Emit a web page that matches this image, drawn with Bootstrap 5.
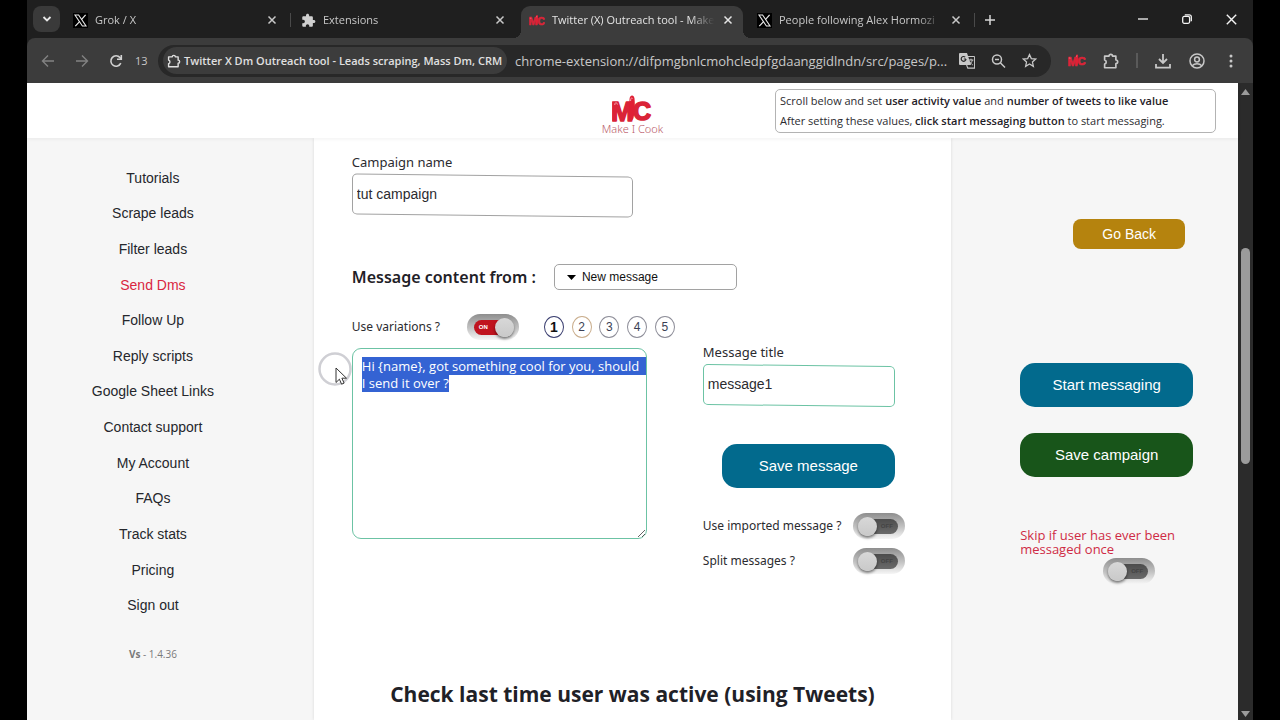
<!DOCTYPE html>
<html lang="en">
<head>
<meta charset="utf-8">
<meta name="viewport" content="width=device-width, initial-scale=1">
<title>Twitter (X) Outreach tool - Make I Cook</title>
<link href="https://cdn.jsdelivr.net/npm/bootstrap@5.3.0/dist/css/bootstrap.min.css" rel="stylesheet">
<style>
  :root { --ui: "Noto Sans", "Open Sans", sans-serif; --chrome: "Open Sans", "Noto Sans", sans-serif; --arial: "Liberation Sans", Arial, sans-serif; }
  body { background: #000; font-family: var(--ui); font-size: 13px; color: #2b2b2f; }
  button { border: 0; background: none; padding: 0; color: inherit; }
  svg { display: block; flex: none; }
  .window-frame { margin: 0 27px; min-height: 100vh; background: #1f1f1f; }

  /* tab strip */
  .tab-strip { height: 38px; padding: 6px 0 0 6px; font: 11px/16px var(--chrome); color: #c8c8c8; }
  .tab-search { width: 27px; height: 26px; border-radius: 8px; background: #3a3a3a; margin-right: 5px; }
  .browser-tab { position: relative; flex: 0 1 222px; min-width: 0; height: 32px; padding: 0 10px 4px 8px; margin-right: 6px; gap: 7px; }
  .browser-tab.split::after { content: ""; position: absolute; right: -4px; top: 7px; width: 1px; height: 14px; background: #4a4a4a; }
  .browser-tab.current { background: #3c3c3c; border-radius: 9px 9px 0 0; color: #e4e4e4; }
  .browser-tab.current::before, .browser-tab.current::after { content: ""; position: absolute; bottom: 0; width: 8px; height: 8px; }
  .browser-tab.current::before { left: -8px; background: radial-gradient(circle at 0 0, transparent 8px, #3c3c3c 8px); }
  .browser-tab.current::after { right: -8px; background: radial-gradient(circle at 100% 0, transparent 8px, #3c3c3c 8px); }
  .tab-label { flex: 1 1 0; min-width: 0; overflow: hidden; white-space: nowrap; -webkit-mask-image: linear-gradient(90deg, #000 84%, transparent 99%); mask-image: linear-gradient(90deg, #000 84%, transparent 99%); }
  .new-tab { margin: 0 0 4px 7px; }
  .win-btn { width: 44px; height: 26px; color: #f4f4f4; }

  /* toolbar */
  .tool-bar { height: 45px; background: #3c3c3c; border-radius: 8px 8px 0 0; padding: 0 13px; font: 13px/20px var(--chrome); color: #c8c8c8; }
  .nav-keys { gap: 18px; width: 118px; flex: none; }
  .zoom-count { margin-left: -7px; font-size: 11px; }
  .omnibox { height: 32px; border-radius: 16px; background: #282828; padding: 0 14px 0 5px; margin-right: 17px; min-width: 0; }
  .site-chip { height: 27px; border-radius: 14px; background: #3c3c3c; padding: 0 5px 0 4px; gap: 3px; font-size: 11px; font-weight: 600; color: #e0e0e0; white-space: nowrap; }
  .address { background: none; border: 0; outline: 0; padding: 0; color: #c8c8c8; margin-left: 8px; min-width: 0; width: 100%; text-overflow: ellipsis; }
  .tool-icons { gap: 16px; flex: none; }
  .tool-sep { width: 2px; height: 15px; background: #5a5a5a; }

  /* page */
  .page-grid { display: grid; grid-template-columns: minmax(0, 9fr) minmax(0, 20fr) minmax(0, 9fr); }
  .page-head { height: 55px; background: #fff; box-shadow: 0 1px 4px rgba(0,0,0,.06); position: relative; }
  .brand-name { font: 300 11px/12px var(--ui); color: #b95a68; }
  .tip-box { width: 441px; justify-self: end; margin: 6px 22px 0 0; height: 44px; border: 1px solid #b3b3b3; border-radius: 5px; padding: 1px 4px; font-size: 11px; line-height: 20px; font-family: var(--chrome); white-space: nowrap; background: #fff; z-index: 1; }
  .tip-box b { color: #1f2127; font-weight: 600; }
  .page-body { background: #f6f6f6; min-height: calc(100vh - 138px); }
  .side-menu { padding: 22px 35px 0 0; }
  .side-links { display: grid; grid-template-rows: repeat(13, 1fr); height: 463px; font: 14px/20px var(--arial); }
  .side-links a { color: #25272c; text-decoration: none; display: flex; align-items: center; justify-content: center; }
  .side-links a.active { color: #d9263f; }
  .version { font: 10px/14px var(--chrome); color: #7a7a7a; margin-top: 24px; }
  .panel-card { background: #fff; box-shadow: 0 0 3px rgba(0,0,0,.12); padding: 14px 38px 10px; }
  .field-label { line-height: 20px; display: block; }

  .slant-field { position: relative; height: 44px; }
  .slant-field::before { content: ""; position: absolute; inset: 3px 0 0; border: 1px solid #a2a2a2; border-radius: 5px; transform: skewY(.6deg); }
  .slant-field.mint::before { border-color: #6cc3a4; }
  .slant-field input { position: relative; width: 100%; height: 100%; border: 0; outline: 0; background: none; padding: 0 5px; font: 14px/20px var(--arial); color: #2b2b2f; }
  .campaign-field { width: 281px; }
  .source-row { margin-top: 48px; gap: 18px; }
  .source-title { font-size: 16px; font-weight: 600; line-height: 26px; color: #1f2127; margin: 0; }
  .source-pick { width: 183px; height: 26px; border: 1px solid #a2a2a2; border-radius: 5px; appearance: none; padding: 0 8px 0 27px; font: 12px/16px var(--arial); color: #111; background: #fff url("data:image/svg+xml,%3Csvg xmlns='http://www.w3.org/2000/svg' width='9' height='5'%3E%3Cpath d='M0 0h9L4.500 5z'/%3E%3C/svg%3E") no-repeat 12px 50%; }

  .editor-row { margin-top: 23px; gap: 56px; }
  .editor-side { width: 295px; }
  .small-label { font-size: 12px; line-height: 20px; }
  .variation-row { height: 28px; margin-bottom: 7px; }
  .variation-row .small-label { width: 115px; }
  .round-set { width: 131px; margin-left: 25px; flex: none; }
  .round-btn { width: 20px; height: 22px; border: 1px solid #8d8d98; border-radius: 50%; font: 12px/20px var(--arial); color: #3b3f55; background: #fff; }
  .round-btn.picked { border-color: #3b3f70; font-weight: 700; font-size: 14px; color: #111; }
  .round-btn.warm { border-color: #c9ad8c; }
  .message-text { display: block; width: 295px; height: 191px; border: 1px solid #6cc3a4; border-radius: 9px; outline: 0; padding: 9px 1px 9px 9px; font: 13px/17px var(--chrome); color: #2b2b2f; background: #fff; resize: both; overflow: hidden; }
  .message-text::selection { background: #3463d3; color: #fff; }
  .pointer-mark { position: absolute; left: -34px; top: 4px; pointer-events: none; }
  .title-side { width: 202px; padding-top: 29px; }
  .title-field { width: 192px; }

  .big-btn { display: block; width: 173px; height: 44px; border-radius: 15px; color: #fff; font: 15px/20px var(--arial); background: #026a8d; }
  .title-side .big-btn { margin: 38px 0 20px 19px; }
  .big-btn.green { background: #18551a; margin-top: 26px; }
  .back-btn { display: block; width: 112px; height: 30px; border-radius: 8px; color: #fff; background: #b5830e; font: 14px/20px var(--arial); margin: 0 0 114px 53px; }
  .option-row { height: 35px; }

  .slide-toggle { appearance: none; position: relative; flex: none; width: 52px; height: 26px; margin: 0; border-radius: 13px; background: linear-gradient(#8e8e8e, #c4c4c4 55%, #f6f6f6); cursor: pointer; }
  .slide-toggle::before { content: "OFF"; position: absolute; inset: 6px 7px 5px 9px; border-radius: 8px; background: linear-gradient(#4c4c4c, #6a6a6a); color: #444; font: 700 6px/15px var(--arial); text-align: right; padding-right: 5px; }
  .slide-toggle::after { content: ""; position: absolute; left: 5px; top: 4px; width: 19px; height: 19px; border-radius: 50%; background: linear-gradient(#d8d8d8, #c9c9c9); box-shadow: 0 2px 3px rgba(0,0,0,.5); }
  .slide-toggle:checked::before { content: "ON"; background: #c0141f; color: #fff; text-align: left; padding-left: 5px; inset: 6px 9px 5px 7px; }
  .slide-toggle:checked::after { left: 28px; }

  .activity-title { font-size: 21px; font-weight: 700; line-height: 30px; margin: 101px 0 0; text-align: center; color: #1f2127; white-space: nowrap; font-family: var(--chrome); }
  .action-side { padding: 81px 0 0 69px; }
  .skip-label { color: #cf2b45; line-height: 14px; margin-top: 51px; display: block; width: 165px; font-family: var(--chrome); }
  .skip-toggle { display: block; margin: 2px 0 0 83px; }

  .scroll-track { width: 15px; flex: none; background: #2b2b2b; padding: 6px 0 3px; }
  .scroll-thumb { width: 9px; border-radius: 5px; background: #9b9b9b; flex: 215 1 0; }
</style>
</head>
<body>
<svg width="0" height="0" class="position-absolute" aria-hidden="true">
  <defs>
    <symbol id="x-mark" viewBox="0 0 15 15">
      <rect width="15" height="15" fill="#000"/>
      <path d="M2 2h3.600l7.400 11H9.400z" fill="none" stroke="#e8e8e8" stroke-width="1.100"/>
      <path d="M12.600 1.800 8.400 6.700M6.800 8.300 2.300 13.200" stroke="#e8e8e8" stroke-width="1.200"/>
    </symbol>
    <symbol id="close-x" viewBox="0 0 10 10"><path d="M1.500 1.500l7 7m0-7l-7 7" stroke="currentColor" stroke-width="1.500" fill="none"/></symbol>
    <symbol id="brand" viewBox="0 0 40 28">
      <g font-family="Liberation Sans, Arial, sans-serif" font-weight="700" fill="#da2438" stroke="#da2438" stroke-width="1.600" stroke-linejoin="round">
        <text x="-1" y="26" font-size="27">M</text>
        <text x="21" y="25" font-size="25">C</text>
      </g>
      <path d="M17.500 4.500c0-5 4.500-5.500 5-1 .6 6 .4 13-1 19.500-1.500 4-4.500 3-4.500-1z" fill="#e01f34"/>
      <path d="M2.800 10c0-3 2-3 2.600-.5M18.600 6c0-3 1-3.500 2-2.500" stroke="#f4a7b0" fill="none"/>
    </symbol>
    <symbol id="puzzle-line" viewBox="0 0 24 24"><path d="M3.500 5.500h5.800a2.400 2.400 0 0 1 4.800 0h4.400v5.200a2.400 2.400 0 0 1 0 4.800v5.500h-15v-4.800a2.900 2.900 0 0 0 0-5.600z" fill="none" stroke="currentColor" stroke-width="2.200" stroke-linejoin="round"/></symbol>
  </defs>
</svg>

<div class="window-frame d-flex flex-column">
  <div class="tab-strip d-flex align-items-start">
    <button class="tab-search d-flex align-items-center justify-content-center flex-shrink-0" aria-label="Search tabs"><svg width="10" height="8" viewBox="0 0 10 8"><path d="M1.500 2l3.500 3.500L8.500 2" fill="none" stroke="#e8e8e8" stroke-width="1.800"/></svg></button>
    <div class="browser-tab split d-flex align-items-center"><svg width="15" height="15"><use href="#x-mark"/></svg><span class="tab-label">Grok / X</span><button aria-label="Close tab"><svg width="10" height="10"><use href="#close-x"/></svg></button></div>
    <div class="browser-tab d-flex align-items-center"><svg width="15" height="15" viewBox="0 0 24 24"><path fill="#cfcfcf" d="M20.500 11H19V7c0-1.100-.9-2-2-2h-4V3.500C13 2.120 11.880 1 10.500 1S8 2.120 8 3.500V5H4c-1.100 0-1.990.9-1.990 2v3.800H3.500c1.490 0 2.700 1.210 2.700 2.700s-1.210 2.700-2.700 2.700H2V20c0 1.100.9 2 2 2h3.800v-1.500c0-1.490 1.210-2.700 2.700-2.700s2.700 1.210 2.700 2.700V22H17c1.100 0 2-.9 2-2v-4h1.500c1.380 0 2.500-1.120 2.500-2.500S21.880 11 20.500 11z"/></svg><span class="tab-label">Extensions</span><button aria-label="Close tab"><svg width="10" height="10"><use href="#close-x"/></svg></button></div>
    <div class="browser-tab current d-flex align-items-center"><svg width="16" height="15"><use href="#brand"/></svg><span class="tab-label">Twitter (X) Outreach tool - Make</span><button aria-label="Close tab"><svg width="10" height="10"><use href="#close-x"/></svg></button></div>
    <div class="browser-tab split d-flex align-items-center"><svg width="15" height="15"><use href="#x-mark"/></svg><span class="tab-label">People following Alex Hormozi</span><button aria-label="Close tab"><svg width="10" height="10"><use href="#close-x"/></svg></button></div>
    <button class="new-tab align-self-center" aria-label="New tab"><svg width="12" height="12" viewBox="0 0 12 12"><path d="M6 1v10M1 6h10" stroke="#d8d8d8" stroke-width="1.500"/></svg></button>
    <div class="d-flex ms-auto">
      <button class="win-btn d-flex align-items-center justify-content-center" aria-label="Minimize"><svg width="10" height="10" viewBox="0 0 10 10"><path d="M0 5h10" stroke="currentColor" stroke-width="1.300"/></svg></button>
      <button class="win-btn d-flex align-items-center justify-content-center" aria-label="Restore"><svg width="10" height="10" viewBox="0 0 10 10" fill="none" stroke="currentColor" stroke-width="1.300"><rect x=".7" y="2.400" width="6.900" height="6.900" rx="1.500"/><path d="M2.800.8h4.500a2 2 0 0 1 2 2v4.500"/></svg></button>
      <button class="win-btn d-flex align-items-center justify-content-center" aria-label="Close"><svg width="11" height="11" viewBox="0 0 11 11"><path d="M.8.8l9.400 9.400m0-9.400L.8 10.200" stroke="currentColor" stroke-width="1.400"/></svg></button>
    </div>
  </div>

  <div class="tool-bar d-flex align-items-center">
    <div class="nav-keys d-flex align-items-center">
      <button aria-label="Back"><svg width="16" height="16" viewBox="0 0 16 16" fill="none" stroke="#828282" stroke-width="1.400"><path d="M14 8H3M8 2.500L2.500 8 8 13.500"/></svg></button>
      <button aria-label="Forward"><svg width="16" height="16" viewBox="0 0 16 16" fill="none" stroke="#828282" stroke-width="1.400"><path d="M2 8h11M8 2.500L13.500 8 8 13.500"/></svg></button>
      <button aria-label="Reload"><svg width="16" height="16" viewBox="0 0 16 16" fill="none" stroke="#d2d2d2" stroke-width="1.600"><path d="M12.800 10.200A5.200 5.200 0 1 1 12 4.600l1.200 1.200"/><path d="M13.300 2v4.300H9"/></svg></button>
      <span class="zoom-count">13</span>
    </div>
    <div class="omnibox d-flex align-items-center flex-grow-1">
      <div class="site-chip d-flex align-items-center flex-shrink-0"><svg width="14" height="14" viewBox="1 1 22 22"><use href="#puzzle-line" width="24" height="24"/></svg><span>Twitter X Dm Outreach tool - Leads scraping, Mass Dm, CRM</span></div>
      <input class="address" aria-label="Address" value="chrome-extension://difpmgbnlcmohcledpfgdaanggidlndn/src/pages/p...">
      <div class="d-flex align-items-center gap-3 flex-shrink-0 ps-1">
        <svg width="16" height="16" viewBox="0 0 16 16"><path d="M1 0h7l4 12H1a1 1 0 0 1-1-1V1a1 1 0 0 1 1-1z" fill="#c8c8c8"/><path d="M9 3.500h6a.6.600 0 0 1 .6.600v11H8.800L7.600 12" fill="none" stroke="#c8c8c8" stroke-width="1.100"/><path d="M7 6H4.800M7 6a2.400 2.400 0 1 1-.8-1.900" fill="none" stroke="#282828" stroke-width="1.200"/><path d="M9.800 7h4.600M12 5.700V7m1.300 0c-.4 2-1.600 3.600-3 4.500M10.800 8.500c.5 1.200 1.500 2.500 3 3.500" fill="none" stroke="#c8c8c8"/></svg>
        <svg width="15" height="16" viewBox="0 0 15 16" fill="none" stroke="#c8c8c8" stroke-width="1.500"><circle cx="6" cy="6.500" r="4.500"/><path d="M9.300 9.800l4.700 4.700M4 6.500h4"/></svg>
        <svg width="15" height="15" viewBox="0 0 24 24"><path d="M12 2.500l2.900 6.500 7.100.7-5.300 4.700 1.500 7L12 17.700l-6.200 3.700 1.500-7L2 9.700l7.100-.7z" fill="none" stroke="#c8c8c8" stroke-width="2"/></svg>
      </div>
    </div>
    <div class="tool-icons d-flex align-items-center">
      <svg width="18" height="13"><use href="#brand"/></svg>
      <svg width="18" height="18"><use href="#puzzle-line"/></svg>
      <span class="tool-sep"></span>
      <svg width="18" height="18" viewBox="0 0 18 18" fill="none" stroke="#c8c8c8" stroke-width="1.800"><path d="M9 2v8.500M5 7l4 4 4-4M2 12v3.600h14V12"/></svg>
      <svg width="18" height="18" viewBox="0 0 18 18" fill="none" stroke="#c8c8c8" stroke-width="1.500"><circle cx="9" cy="9" r="7"/><circle cx="9" cy="7.500" r="2.400"/><path d="M4.200 13.800c2.400-2.600 7.200-2.600 9.600 0"/></svg>
      <svg width="18" height="18" viewBox="0 0 18 18" fill="#c8c8c8"><circle cx="9" cy="4" r="1.500"/><circle cx="9" cy="9" r="1.500"/><circle cx="9" cy="14" r="1.500"/></svg>
    </div>
  </div>

  <div class="d-flex flex-grow-1">
    <div class="flex-grow-1 d-flex flex-column">
      <header class="page-head page-grid">
        <div></div>
        <div class="d-flex flex-column align-items-center pt-2"><svg class="mt-1" width="40" height="28"><use href="#brand"/></svg><span class="brand-name">Make I Cook</span></div>
        <div class="tip-box">Scroll below and set <b>user activity value</b> and <b>number of tweets to like value</b><br>After setting these values, <b>click start messaging button</b> to start messaging.</div>
      </header>
      <div class="page-body page-grid flex-grow-1">
        <nav class="side-menu">
          <div class="side-links">
            <a href="#">Tutorials</a><a href="#">Scrape leads</a><a href="#">Filter leads</a><a href="#" class="active">Send Dms</a><a href="#">Follow Up</a><a href="#">Reply scripts</a><a href="#">Google Sheet Links</a><a href="#">Contact support</a><a href="#">My Account</a><a href="#">FAQs</a><a href="#">Track stats</a><a href="#">Pricing</a><a href="#">Sign out</a>
          </div>
          <div class="version text-center"><b>Vs</b> - 1.4.36</div>
        </nav>

        <main class="panel-card">
          <label class="field-label" for="campaign">Campaign name</label>
          <div class="slant-field campaign-field"><input id="campaign" type="text" value="tut campaign"></div>
          <div class="source-row d-flex align-items-center">
            <label class="source-title" for="source">Message content from :</label>
            <select id="source" class="source-pick"><option>New message</option></select>
          </div>
          <div class="editor-row d-flex">
            <div class="editor-side flex-shrink-0">
              <div class="variation-row d-flex align-items-center">
                <label class="small-label flex-shrink-0" for="variations">Use variations ?</label>
                <input id="variations" class="slide-toggle" type="checkbox" checked>
                <div class="round-set d-flex justify-content-between">
                  <button class="round-btn picked">1</button><button class="round-btn warm">2</button><button class="round-btn">3</button><button class="round-btn">4</button><button class="round-btn">5</button>
                </div>
              </div>
              <div class="position-relative">
                <textarea class="message-text" id="message" aria-label="Message">Hi {name}, got something cool for you, should I send it over ?</textarea>
                <svg class="pointer-mark" width="36" height="36" viewBox="0 0 36 36"><circle cx="17" cy="17" r="15.500" fill="#fff" fill-opacity=".75" stroke="#cfcfd4" stroke-width="2.500"/><path d="M18 16v14.500l3.400-3.300 2.200 5 2.500-1.100-2.200-4.900h4.600z" fill="#fff" stroke="#333" stroke-width="1"/></svg>
              </div>
            </div>
            <div class="title-side flex-shrink-0">
              <label class="field-label" for="title">Message title</label>
              <div class="slant-field mint title-field"><input id="title" type="text" value="message1"></div>
              <button class="big-btn">Save message</button>
              <div class="option-row d-flex align-items-center justify-content-between"><label class="small-label" for="imported">Use imported message ?</label><input id="imported" class="slide-toggle" type="checkbox"></div>
              <div class="option-row d-flex align-items-center justify-content-between"><label class="small-label" for="split">Split messages ?</label><input id="split" class="slide-toggle" type="checkbox"></div>
            </div>
          </div>
          <h2 class="activity-title">Check last time user was active (using Tweets)</h2>
        </main>

        <aside class="action-side">
          <button class="back-btn">Go Back</button>
          <button class="big-btn">Start messaging</button>
          <button class="big-btn green">Save campaign</button>
          <label class="skip-label" for="skip">Skip if user has ever been messaged once</label>
          <input id="skip" class="slide-toggle skip-toggle" type="checkbox">
        </aside>
      </div>
    </div>
    <div class="scroll-track d-flex flex-column align-items-center">
      <svg width="9" height="6" viewBox="0 0 9 6"><path d="M4.500 0L9 6H0z" fill="#9b9b9b"/></svg>
      <span style="flex: 153 1 0"></span>
      <span class="scroll-thumb"></span>
      <span style="flex: 247 1 0"></span>
      <svg width="9" height="6" viewBox="0 0 9 6"><path d="M0 0h9L4.500 6z" fill="#9b9b9b"/></svg>
    </div>
  </div>
</div>
<script src="https://cdn.jsdelivr.net/npm/bootstrap@5.3.0/dist/js/bootstrap.bundle.min.js"></script>
<script>
  const message = document.getElementById('message');
  message.focus({ preventScroll: true });
  message.select();
</script>
</body>
</html>
